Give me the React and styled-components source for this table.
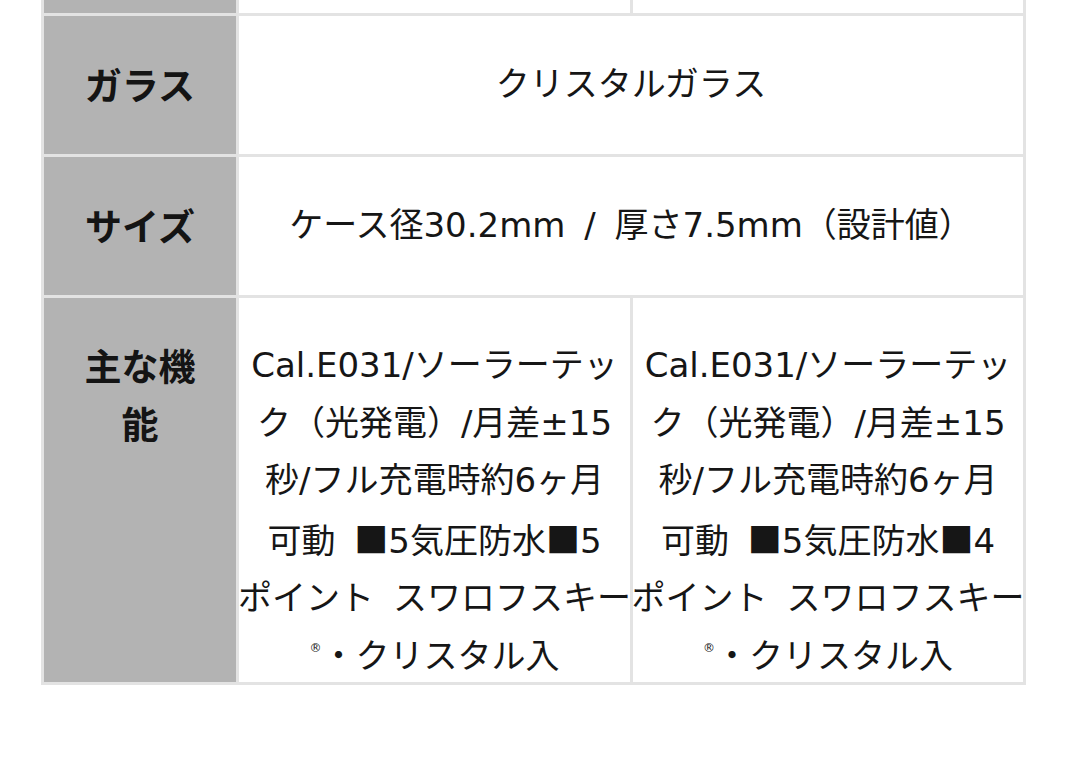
import React from "react";
import styled, { createGlobalStyle } from "styled-components";

const GlobalStyle = createGlobalStyle`
  html, body {
    margin: 0;
    padding: 0;
    background: #ffffff;
  }
  body {
    font-family: "DejaVu Sans", "Noto Sans CJK JP", sans-serif;
    color: #161616;
  }
`;

const Page = styled.div`
  width: 1080px;
  height: 765px;
  overflow: hidden;
  background: #ffffff;
`;

const SpecTable = styled.div`
  margin-left: 41px;
  width: 985px;
  box-sizing: border-box;
  display: grid;
  grid-template-columns: 192px 391px 390px;
  grid-auto-rows: auto;
  gap: 3px;
  padding: 0 3px 3px 3px;
  background: #e3e3e3;
`;

const HeadCell = styled.div`
  background: #b3b3b3;
  box-sizing: border-box;
  height: ${(p) => p.$h}px;
  padding: ${(p) => (p.$top ? "39px 30px 0" : "0 30px")};
  display: flex;
  align-items: ${(p) => (p.$top ? "flex-start" : "center")};
  justify-content: center;
  text-align: center;
  font-family: "Noto Sans CJK JP", sans-serif;
  font-weight: 700;
  font-size: 37px;
  line-height: 57.5px;
  color: #141414;
`;

const DataCell = styled.div`
  background: #ffffff;
  box-sizing: border-box;
  height: ${(p) => p.$h}px;
  grid-column: span ${(p) => p.$span || 1};
  padding: ${(p) => (p.$top ? "39px 0 0" : "0")};
  display: flex;
  flex-direction: column;
  align-items: center;
  justify-content: ${(p) => (p.$top ? "flex-start" : "center")};
  text-align: center;
  font-family: "DejaVu Sans", "Noto Sans CJK JP", sans-serif;
  font-size: 34px;
  line-height: 57.5px;
  word-spacing: 8px;
  color: #161616;
`;

const Line = styled.span`
  display: block;
  white-space: nowrap;
`;

const Mark = styled.span`
  font-family: "Noto Sans CJK JP", sans-serif;
`;

const Reg = styled.sup`
  font-size: 12px;
  line-height: 0;
  vertical-align: 16px;
  margin-right: 0;
`;

function FunctionText({ last }) {
  return (
    <>
      <Line>Cal.E031/ソーラーテッ</Line>
      <Line>ク（光発電）/月差±15</Line>
      <Line>秒/フル充電時約6ヶ月</Line>
      <Line>
        可動 <Mark>■</Mark>5気圧防水<Mark>■</Mark>
        {last}
      </Line>
      <Line>ポイント スワロフスキー</Line>
      <Line>
        <Reg>®</Reg>・クリスタル入
      </Line>
    </>
  );
}

export default function App() {
  return (
    <Page>
      <GlobalStyle />
      <SpecTable>
        <HeadCell $h={13} />
        <DataCell $h={13} />
        <DataCell $h={13} />

        <HeadCell $h={138}>ガラス</HeadCell>
        <DataCell $h={138} $span={2}>
          <Line>クリスタルガラス</Line>
        </DataCell>

        <HeadCell $h={138}>サイズ</HeadCell>
        <DataCell $h={138} $span={2}>
          <Line>ケース径30.2mm / 厚さ7.5mm（設計値）</Line>
        </DataCell>

        <HeadCell $h={384} $top>
          主な機能
        </HeadCell>
        <DataCell $h={384} $top>
          <FunctionText last="5" />
        </DataCell>
        <DataCell $h={384} $top>
          <FunctionText last="4" />
        </DataCell>
      </SpecTable>
    </Page>
  );
}
